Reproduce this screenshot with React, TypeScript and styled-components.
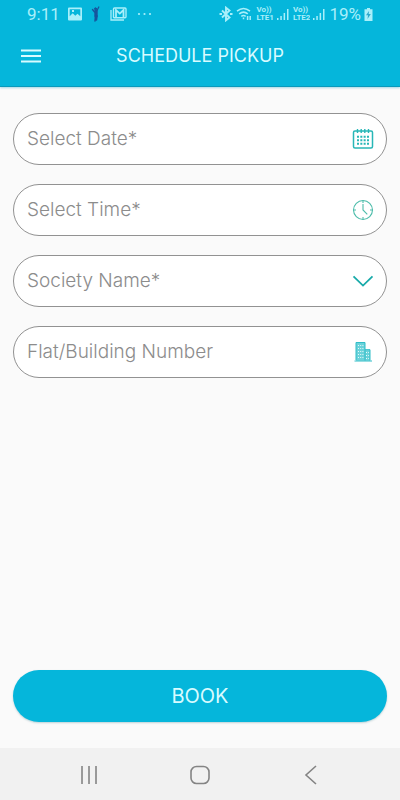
import React from "react";
import styled, { createGlobalStyle } from "styled-components";

const GlobalStyle = createGlobalStyle`
  *, *::before, *::after { box-sizing: border-box; }
  body { margin: 0; background: #fafafa; }
  button, input, select { font-family: inherit; margin: 0; }
`;

const Screen = styled.div`
  display: flex;
  flex-direction: column;
  min-height: 100vh;
  font-family: Inter, "Open Sans", sans-serif;
  background: #fafafa;
`;

const Header = styled.header`
  background: #05b6db;
  color: #d8fbff;
  border-bottom: 1px solid #0999bb;
  box-shadow: 0 1px 2px rgba(5, 150, 185, 0.35);
`;

const StatusBar = styled.div`
  display: flex;
  align-items: center;
  justify-content: space-between;
  height: 28px;
  padding: 0 27px;
  color: #a9effa;
  font-family: Roboto, sans-serif;
  font-size: 17px;
  line-height: 28px;
`;

const StatusGroup = styled.div<{ $gap: number }>`
  display: flex;
  align-items: center;
  gap: ${(p) => p.$gap}px;
  svg { display: block; flex: none; }
`;

const Network = styled.span`
  display: grid;
  grid-template-rows: 8px 8px;
  font-size: 8px;
  font-weight: 700;
  line-height: 8px;
  span { overflow: hidden; }
`;

const AppBar = styled.div`
  display: grid;
  grid-template-columns: 40px 1fr 40px;
  align-items: center;
  height: 58px;
  padding: 0 11px 2px;
`;

const IconButton = styled.button`
  display: flex;
  align-items: center;
  justify-content: center;
  height: 40px;
  padding: 0;
  border: 0;
  background: none;
  color: inherit;
  cursor: pointer;
`;

const Title = styled.h1`
  margin: 0;
  text-align: center;
  font-size: 18px;
  font-weight: 400;
  line-height: 28px;
  white-space: nowrap;
`;

const Form = styled.form`
  flex: 1;
  display: flex;
  flex-direction: column;
  gap: 19px;
  padding: 26px 13px;
`;

const Field = styled.label`
  display: flex;
  align-items: center;
  height: 52px;
  padding: 0 12px 0 13px;
  border: 1px solid #929292;
  border-radius: 26px;
  background: #ffffff;
  svg { display: block; flex: none; }
`;

const TextInput = styled.input`
  flex: 1;
  min-width: 0;
  height: 28px;
  padding: 0;
  border: 0;
  outline: 0;
  background: none;
  color: #8c8c8c;
  font-size: 19px;
  font-weight: 300;
  line-height: 28px;
  &::placeholder { color: #8c8c8c; opacity: 1; }
`;

const SelectInput = styled(TextInput).attrs({ as: "select" })`
  appearance: none;
`;

const BookButton = styled.button`
  height: 52px;
  margin-top: auto;
  border: 0;
  border-radius: 26px;
  background: #05b6db;
  color: #d8fbff;
  box-shadow: 0 1px 2px rgba(0, 90, 110, 0.25);
  font-size: 20px;
  line-height: 28px;
  cursor: pointer;
`;

const NavBar = styled.nav`
  display: flex;
  justify-content: space-between;
  height: 52px;
  padding: 2px 69px 0;
  background: #f1f1f1;
  color: #848484;
`;

const NavButton = styled(IconButton)`
  width: 40px;
  height: 50px;
`;

const Signal = () => (
  <svg width="13" height="13" viewBox="0 0 13 13" fill="currentColor">
    <path d="M0 10h1.5v2H0z M3.3 8h1.5v4H3.3z M6.6 5h1.5v7H6.6z" />
    <path d="M10 1h1.5v11H10z" />
  </svg>
);

const CalendarIcon = () => (
  <svg width="22" height="22" viewBox="0 0 22 22" fill="none" stroke="#28b7b7">
    <rect x="1.5" y="3" width="19" height="17" rx="1.5" strokeWidth="1.5" />
    <path d="M5.5 1v4M9.2 1v4M12.8 1v4M16.5 1v4" strokeWidth="1.4" />
    <path d="M5 8.7h12M5 12.2h12M5 15.7h12" strokeWidth="2" strokeDasharray="2 1.33" />
  </svg>
);

const ClockIcon = () => (
  <svg width="22" height="22" viewBox="0 0 22 22" fill="none" stroke="#4cbcaa" strokeWidth="1.1">
    <circle cx="11" cy="11" r="9.5" />
    <path d="M11 1.5v2.5M11 18v2.5M1.5 11H4M18 11h2.5M11 5v6l4.3 4.3" />
  </svg>
);

const ChevronIcon = () => (
  <svg width="22" height="22" viewBox="0 0 22 22" fill="none" stroke="#18aaa9" strokeWidth="1.8">
    <path d="M1.5 6.3 11 15.6l9.5-9.3" />
  </svg>
);

const BuildingIcon = () => (
  <svg width="22" height="22" viewBox="0 0 22 22">
    <path d="M4 1.5h9v7.2h5v11H4z" fill="#6bd2da" />
    <path d="M4 19V1.5h9v18M13 8.7h5V19.5M2.5 20H20" fill="none" stroke="#30bdc7" />
    <path
      d="M6 4.5h6M6 7.5h6M6 10.5h6M6 13.5h6M6 16.5h6M14 11.5h3M14 14.5h3M14 17.5h3"
      stroke="#e4fafa"
      strokeDasharray="1 1.2"
    />
  </svg>
);

export default function App() {
  return (
    <Screen>
      <GlobalStyle />
      <Header>
        <StatusBar>
          <StatusGroup $gap={8}>
            <span>9:11</span>
            <svg width="14" height="14" viewBox="0 0 14 14">
              <path
                fill="currentColor"
                fillRule="evenodd"
                d="M1 .5h12q1 0 1 1v11q0 1-1 1H1q-1 0-1-1v-11q0-1 1-1zM1.7 2.2v7l3-3 2.6 2.5 2.2-2 2.8 2.5v-7zM4 3h2v2H4z"
              />
            </svg>
            <svg width="12" height="16" viewBox="0 0 12 16" fill="none" stroke="#17549c" strokeLinecap="round">
              <path d="M8.8 1 7 4.5M2.5 3.5 4.5 6" strokeWidth="1.3" />
              <path d="M6 5v5" strokeWidth="3.4" />
              <path d="M5.5 10 5 15M7 10l-.5 4" strokeWidth="1.5" />
              <circle cx="5.5" cy="2.8" r="1" fill="#17549c" />
            </svg>
            <svg width="17" height="14" viewBox="0 0 17 14" fill="none" stroke="currentColor">
              <path d="M1 3v10h13" strokeWidth="1.3" />
              <rect x="3.5" y="1" width="12.5" height="9.8" rx="1" strokeWidth="1.4" />
              <path d="M6 10V3l3.8 3.6L13.5 3v7" strokeWidth="1.8" />
            </svg>
            <svg width="22" height="14" viewBox="0 0 22 14" fill="currentColor">
              <circle cx="4" cy="7" r="1.1" />
              <circle cx="9.5" cy="7" r="1.1" />
              <circle cx="15" cy="7" r="1.1" />
            </svg>
          </StatusGroup>
          <StatusGroup $gap={3}>
            <svg width="14" height="16" viewBox="0 0 14 16" fill="none" stroke="currentColor" strokeWidth="1.9">
              <path d="M3 4.5l7.5 7L7 14.3V1.7l3.5 2.8-7.5 7" />
              <path d="M.5 8h2.5M11 8h2.5" />
            </svg>
            <svg width="17" height="14" viewBox="0 0 17 14" fill="none" stroke="currentColor" strokeWidth="1.5">
              <path d="M1 4.2q6.5-5.4 13 0M3.2 6.9q4.3-3.6 8.6 0M5.3 9.4q2.2-1.8 4.4 0" />
              <path d="M7.5 10.5v1.8M11.6 9v4M14.2 9v4" />
            </svg>
            <Network>
              <span>Vo))</span>
              <span>LTE1</span>
            </Network>
            <Signal />
            <Network>
              <span>Vo))</span>
              <span>LTE2</span>
            </Network>
            <Signal />
            <span>19%</span>
            <svg width="9" height="13" viewBox="0 0 9 13">
              <path fill="currentColor" d="M3 0h3v1.3h2.5V13h-8V1.3H3z" />
              <path fill="#2da9cc" d="M5 3 2 7.3h2L3.5 11l3.3-5H4.7z" />
            </svg>
          </StatusGroup>
        </StatusBar>
        <AppBar>
          <IconButton type="button" aria-label="Open menu">
            <svg width="22" height="16" viewBox="0 0 22 16" stroke="currentColor" strokeWidth="2.2">
              <path d="M1 2.5h20M1 8h20M1 13.5h20" />
            </svg>
          </IconButton>
          <Title>SCHEDULE PICKUP</Title>
        </AppBar>
      </Header>

      <Form onSubmit={(e) => e.preventDefault()}>
        <Field>
          <TextInput aria-label="Select Date" placeholder="Select Date*" />
          <CalendarIcon />
        </Field>
        <Field>
          <TextInput aria-label="Select Time" placeholder="Select Time*" />
          <ClockIcon />
        </Field>
        <Field>
          <SelectInput aria-label="Society Name" defaultValue="">
            <option value="">Society Name*</option>
          </SelectInput>
          <ChevronIcon />
        </Field>
        <Field>
          <TextInput aria-label="Flat/Building Number" placeholder="Flat/Building Number" />
          <BuildingIcon />
        </Field>
        <BookButton type="submit">BOOK</BookButton>
      </Form>

      <NavBar aria-label="System navigation">
        <NavButton type="button" aria-label="Recent apps">
          <svg width="20" height="20" viewBox="0 0 20 20" stroke="currentColor" strokeWidth="1.6">
            <path d="M3 1v18M10 1v18M17 1v18" />
          </svg>
        </NavButton>
        <NavButton type="button" aria-label="Home">
          <svg width="20" height="20" viewBox="0 0 20 20" fill="none" stroke="currentColor" strokeWidth="1.6">
            <rect x="1" y="1.5" width="18" height="17" rx="5.5" />
          </svg>
        </NavButton>
        <NavButton type="button" aria-label="Back">
          <svg width="20" height="20" viewBox="0 0 20 20" fill="none" stroke="currentColor" strokeWidth="1.6">
            <path d="M15 1 5 10l10 9" />
          </svg>
        </NavButton>
      </NavBar>
    </Screen>
  );
}
